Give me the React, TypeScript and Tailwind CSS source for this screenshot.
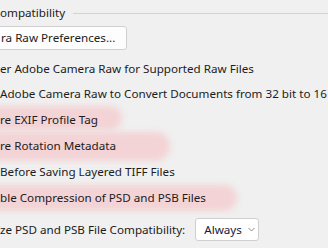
import React from "react";

const font = { fontFamily: '"Noto Sans", "Open Sans", sans-serif' };

function Blob({ w, top, h }: { w: number; top: number; h: number }) {
  return (
    <div
      className="absolute left-[-20px] rounded-full bg-[#f3d3d5] blur-[3px]"
      style={{ width: w + 20, top, height: h }}
    />
  );
}

export default function App() {
  return (
    <div
      className="relative w-[328px] h-[248px] overflow-hidden bg-[#f0f0f0] text-[11.65px] leading-[16px] text-[#1c1c1c]"
      style={font}
    >
      <Blob w={122} top={106} h={24} />
      <Blob w={170} top={132} h={29} />
      <Blob w={237} top={185} h={26} />
      <div className="relative flex flex-col">
        <div className="mt-[5px] flex h-[16px] items-center">
          <span>ompatibility</span>
          <div className="ml-[8px] h-px flex-1 bg-[#d2d2d2]" />
        </div>
        <div className="mt-[5px] ml-[-10px] flex h-[24px] w-[137px] items-center rounded-[3px] border border-[#d0d0d0] bg-[#fdfdfd] pl-[10px]">
          ra Raw Preferences...
        </div>
        <div className="mt-[11px] h-[25px]">er Adobe Camera Raw for Supported Raw Files</div>
        <div className="h-[26px] whitespace-nowrap">Adobe Camera Raw to Convert Documents from 32 bit to 16</div>
        <div className="h-[26px]">re EXIF Profile Tag</div>
        <div className="h-[26px]">re Rotation Metadata</div>
        <div className="h-[26px]">Before Saving Layered TIFF Files</div>
        <div className="h-[28px]">ble Compression of PSD and PSB Files</div>
        <div className="flex h-[23px] items-center">
          <span>ze PSD and PSB File Compatibility:</span>
          <div className="ml-[10px] flex h-[23px] w-[64px] items-center rounded-[3px] border border-[#cfcfcf] bg-white pl-[8px] text-[#1a1a3a]">
            <span>Always</span>
            <svg className="ml-[6px]" width="7" height="5" viewBox="0 0 7 5">
              <path d="M0.5 1 L3.5 4 L6.5 1" fill="none" stroke="#8a8a8a" strokeWidth="1" />
            </svg>
          </div>
        </div>
      </div>
    </div>
  );
}
